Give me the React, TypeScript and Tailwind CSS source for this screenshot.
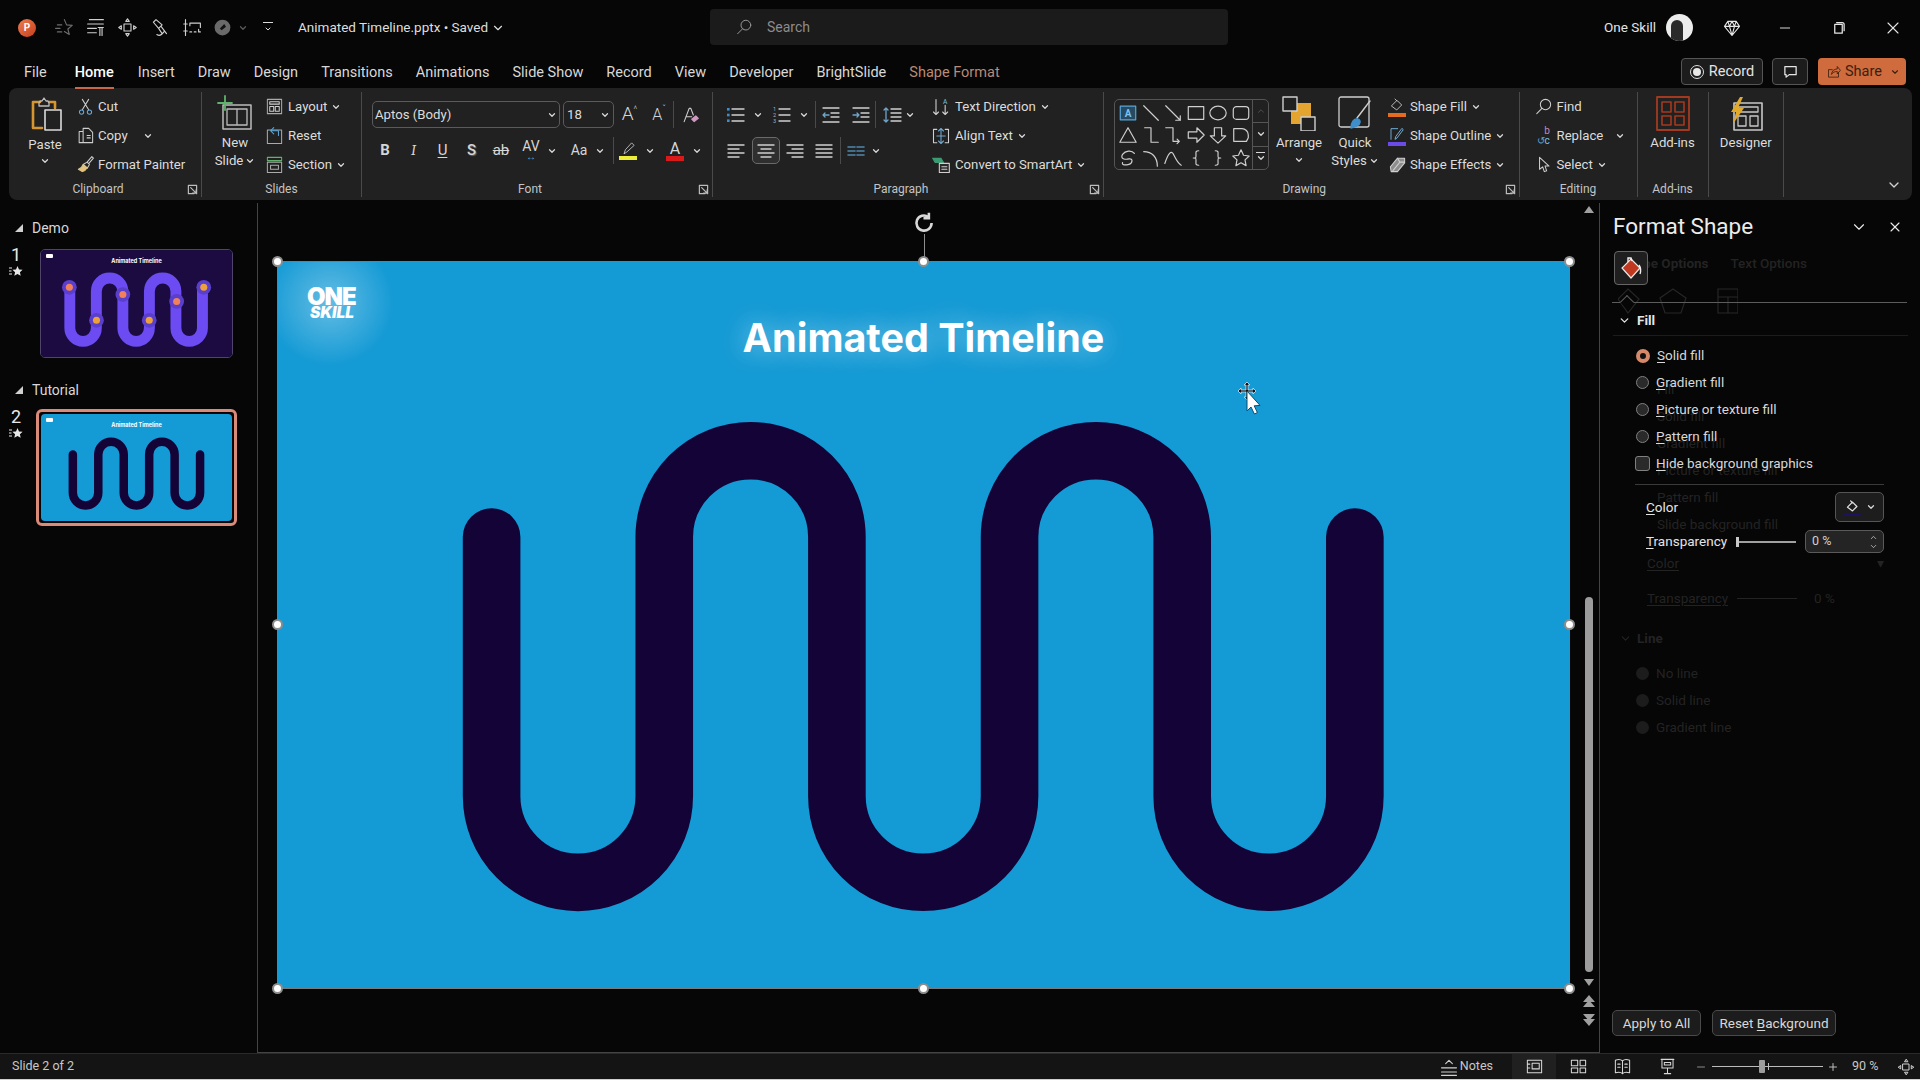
import type { ReactNode } from "react"
import { ChevronDown, ChevronUp, Minus, Plus, X } from "lucide-react"

const font = "[font-family:Roboto,'Noto_Sans',sans-serif]"

const tabs = ["Insert", "Draw", "Design", "Transitions", "Animations", "Slide Show", "Record", "View", "Developer", "BrightSlide"]

function Chev({ className = "" }: { className?: string }) {
  return <ChevronDown strokeWidth={3} className={`w-[10px] h-[10px] text-[#d8d8d8] shrink-0 ${className}`} />
}

function Icon({ children, size = 20, box = 24, className = "" }: { children: ReactNode; size?: number; box?: number; className?: string }) {
  return (
    <svg
      width={size}
      height={size}
      viewBox={`0 0 ${box} ${box}`}
      fill="none"
      stroke="#cfcfcf"
      strokeWidth={1.3}
      strokeLinecap="round"
      strokeLinejoin="round"
      className={`shrink-0 ${className}`}
    >
      {children}
    </svg>
  )
}

function Launcher() {
  return (
    <Icon size={11} box={12}>
      <path d="M1.5 1.5h9v9M1.5 1.5v9h6M4 4l6 6M10 6v4H6" stroke="#bdbdbd" />
    </Icon>
  )
}

function RibbonRow({ icon, label, chev, w = 22 }: { icon: ReactNode; label: string; chev?: boolean; w?: number }) {
  return (
    <div className="flex items-center h-[29px] text-[13.2px] text-[#dcdcdc] whitespace-nowrap">
      <div className="flex justify-center shrink-0" style={{ width: w }}>
        {icon}
      </div>
      <span className="ml-[2px]">{label}</span>
      {chev && <Chev className="ml-[4px]" />}
    </div>
  )
}

function GroupLabel({ label, launcher }: { label?: string; launcher?: boolean }) {
  return (
    <div className={`relative h-[16px] flex items-center justify-center text-[12px] text-[#c4c4c4] ${launcher ? "pr-[14px]" : ""}`}>
      {label}
      {launcher && (
        <span className="absolute right-[3px] top-[3px]">
          <Launcher />
        </span>
      )}
    </div>
  )
}

function Group({ w, label, launcher, children }: { w: number; label?: string; launcher?: boolean; children: ReactNode }) {
  return (
    <div className="flex flex-col shrink-0 border-r border-[#4a4a4a] mt-[4px] mb-[3px]" style={{ width: w }}>
      <div className="flex-1 flex min-h-0">{children}</div>
      <GroupLabel label={label} launcher={launcher} />
    </div>
  )
}

function Box({ w, children, className = "" }: { w: number; children: ReactNode; className?: string }) {
  return (
    <div className={`flex items-center justify-center shrink-0 h-[27px] text-[#d6d6d6] ${className}`} style={{ width: w }}>
      {children}
    </div>
  )
}

const Sep = () => <div className="w-px h-[27px] bg-[#4a4a4a] shrink-0" />

function Lines({ rows, dots, nums, color = "#cfcfcf" }: { rows: [number, number][]; dots?: boolean; nums?: boolean; color?: string }) {
  return (
    <Icon size={20} box={20}>
      {rows.map(([a, b], i) => (
        <path key={i} d={`M${a} ${4 + i * (12 / (rows.length - 1))}H${b}`} stroke={color} strokeWidth={1.4} />
      ))}
      {dots && (
        <>
          <rect x="1" y="3" width="2.6" height="2.6" fill="#3f8ecb" stroke="none" />
          <rect x="1" y="8.7" width="2.6" height="2.6" fill="#3f8ecb" stroke="none" />
          <rect x="1" y="14.4" width="2.6" height="2.6" fill="#3f8ecb" stroke="none" />
        </>
      )}
      {nums &&
        [1, 2, 3].map((n, i) => (
          <text key={n} x="2.5" y={6 + i * 6} textAnchor="middle" fontSize="5.5" fill="#9fb7c9" stroke="none">
            {n}
          </text>
        ))}
    </Icon>
  )
}

const galleryShapes: ReactNode[] = [
  <g key="a">
    <rect x="2.5" y="3.5" width="17" height="15" stroke="#5aa6d8" fill="#274a63" />
    <text x="11" y="15.5" textAnchor="middle" fontSize="11" fill="#7cc0ee" stroke="none" fontWeight="700">A</text>
  </g>,
  <path key="b" d="M3 3l16 16" />,
  <path key="c" d="M3 3l16 16M19 14v5h-5" />,
  <rect key="d" x="2.5" y="4" width="17" height="14" />,
  <ellipse key="e" cx="11" cy="11" rx="9" ry="7.5" />,
  <rect key="f" x="2.5" y="4" width="17" height="14" rx="3.5" />,
  <path key="g" d="M11 3L20 19H2z" />,
  <path key="h" d="M4 3h7v16h8" />,
  <path key="i" d="M3 3h8v15h7M15.5 15.5L18 18l-2.5 2.5" />,
  <path key="j" d="M2.5 7.5H12V3l8 8-8 8v-4.5H2.5z" />,
  <path key="k" d="M7 3h8v9h4.5L11 20 2.5 12H7z" />,
  <path key="l" d="M3 4h9a7 7 0 0 1 7 7v3l-2 4H3z" />,
  <path key="m" d="M18 6c-3-4-10-3-13 1-3 5 3 6 7 5 5-1 4 5 0 6-4 1-8 1-7-2" />,
  <path key="n" d="M3 4c9 0 15 6 15 16" />,
  <path key="o" d="M2 17C6 5 9 3 11 6c2 4 5 11 9 13" />,
  <path key="p" d="M14 3c-4 0-3 2-3 5s0 3-3 3c3 0 3 0 3 3s-1 5 3 5" />,
  <path key="q" d="M8 3c4 0 3 2 3 5s0 3 3 3c-3 0-3 0-3 3s1 5-3 5" />,
  <path key="r" d="M11 2l2.8 6 6.2.8-4.6 4.3 1.2 6.3L11 16.3l-5.6 3.1 1.2-6.3L2 8.8 8.2 8z" />,
]

function wavePath(x0: number, step: number, yTop: number, yBot: number, r: number, startY: number) {
  let d = `M${x0} ${startY}V${yBot}`
  for (let i = 0; i < 5; i++) {
    const x = x0 + step * (i + 1)
    const down = i % 2 === 0
    d += `A${r} ${r} 0 0 ${down ? 0 : 1} ${x} ${down ? yBot : yTop}`
    if (i < 4) d += `V${down ? yTop : yBot}`
  }
  d += `V${startY}`
  return d
}

const mainWave = wavePath(213.6, 172.65, 275, 534, 86.3, 275)

function SlideStar() {
  return (
    <svg width="14" height="12" viewBox="0 0 14 12" className="mt-[1px]">
      <path d="M8.5 1l1.5 3.4 3.6.4-2.7 2.4.8 3.6-3.2-1.9-3.2 1.9.8-3.6L3.4 4.8 7 4.4z" fill="#e6e6e6" />
      <path d="M0 3h3M0 6h2.5M0 9h3" stroke="#e6e6e6" strokeWidth={1} />
    </svg>
  )
}

function Thumb({ index, section, selected, children, className }: { index: number; section: string; selected?: boolean; children: ReactNode; className: string }) {
  return (
    <div>
      <div className="flex items-center h-[20px] pl-[15px] text-[14px] text-[#d8d8d8]">
        <span className="w-0 h-0 border-l-[8px] border-l-transparent border-b-[8px] border-b-[#d0d0d0] mr-[9px]" />
        {section}
      </div>
      <div className={`flex ${selected ? "mt-[9px]" : "mt-[11px]"}`}>
        <div className={`w-[37px] pl-[5px] flex flex-col items-center text-[#e8e8e8] text-[18px] leading-[18px] pr-[10px] ${selected ? "-mt-[1px]" : "-mt-[3px]"}`}>
          {index}
          <SlideStar />
        </div>
        <div className={selected ? "p-[2px] rounded-[6px] border-[3px] border-[#d98a78] -ml-[1px]" : "ml-[3px] rounded-[5px] border border-[#4e4568]"}>
          <div className={`relative w-[191px] h-[107px] rounded-[4px] overflow-hidden flex flex-col items-center ${className}`}>
            <div className="absolute left-[5px] top-[4px] w-[7px] h-[4px] bg-white rounded-[1px]" />
            <div className="absolute top-[7px] text-[5.5px] leading-[8px] font-bold text-white [font-family:Inter,sans-serif]">Animated Timeline</div>
            {children}
          </div>
        </div>
      </div>
    </div>
  )
}

function Handle({ className }: { className: string }) {
  return <span className={`absolute w-[11px] h-[11px] rounded-full bg-white border-2 border-[#8d8d8d] ${className}`} />
}

function Radio({ label, u, rest, on }: { label: string; u: string; rest: string; on?: boolean }) {
  return (
    <div className="flex items-center h-[27px] text-[13.5px] text-[#d8d8d8]" aria-label={label}>
      {on ? (
        <span className="w-[14px] h-[14px] rounded-full border-[4px] border-[#d4896a] bg-[#111] shrink-0" />
      ) : (
        <span className="w-[13px] h-[13px] rounded-full border border-[#808080] bg-[#2a2a2a] shrink-0" />
      )}
      <span className="ml-[7px]">
        <span className="underline underline-offset-2">{u}</span>
        {rest}
      </span>
    </div>
  )
}

function GhostPane() {
  return (
    <div className="absolute inset-0 pointer-events-none text-[13.5px] text-[#232323]">
      <div className="absolute left-[20px] top-[50px] flex gap-[22px] font-bold">
        <span>Shape Options</span>
        <span className="font-medium">Text Options</span>
      </div>
      <svg width="120" height="28" viewBox="0 0 120 28" className="absolute left-[18px] top-[84px]" fill="none" stroke="#262626" strokeWidth={1.2}>
        <path d="M10 2l11 10-11 14L0 12z" />
        <path d="M55 2l13 9-5 15H47l-5-15z" />
        <path d="M100 2h20v24h-20zM100 10h20M110 10v16" />
      </svg>
      <div className="pl-[57px] pt-[173px] leading-[27px]">
        <div>Fill</div>
        <div>Solid fill</div>
        <div>Gradient fill</div>
        <div>Picture or texture fill</div>
        <div>Pattern fill</div>
        <div>Slide background fill</div>
      </div>
      <div className="pl-[47px] leading-[27px] mt-[12px]">
        <div className="flex justify-between w-[237px]">
          <span className="underline underline-offset-2">Color</span>
          <span>▾</span>
        </div>
        <div className="flex items-center mt-[8px]">
          <span className="underline underline-offset-2">Transparency</span>
          <span className="ml-[9px] w-[60px] h-px bg-[#232323]" />
          <span className="ml-[17px]">0 %</span>
        </div>
      </div>
      <div className="pl-[19px] mt-[16px] flex items-center gap-[5px] font-bold">
        <ChevronDown className="w-[13px] h-[13px]" />
        Line
      </div>
      <div className="pl-[36px] mt-[12px] leading-[27px]">
        {["No line", "Solid line", "Gradient line"].map((t) => (
          <div key={t} className="flex items-center gap-[7px]">
            <span className="w-[13px] h-[13px] rounded-full bg-[#1c1c1c]" />
            {t}
          </div>
        ))}
      </div>
    </div>
  )
}

export default function App() {
  return (
    <div className={`h-screen w-full overflow-hidden flex flex-col bg-[#060606] ${font}`}>
      {/* title bar */}
      <div className="h-[55px] shrink-0 flex items-center relative">
        <div className="ml-[18px] w-[18px] h-[18px] rounded-full bg-gradient-to-br from-[#ef7b4d] to-[#c43e1c] flex items-center justify-center text-[10px] font-bold text-white">P</div>
        <div className="ml-[11px] flex items-center">
          <Box w={32}>
            <Icon size={21}>
              <path d="M13 3l2.5 6 6.5.5-5 4.2 1.6 6.3-5.6-3.4M5 9h5M3 13h5M5 17h5" stroke="#6d6d6d" />
            </Icon>
          </Box>
          <Box w={32}>
            <Icon size={21}>
              <path d="M5 3h16M3 8h18M3 13h10M3 18h10M15 12h6M17 12v9M19.5 12v9" />
            </Icon>
          </Box>
          <Box w={32}>
            <Icon size={21}>
              <path d="M8 8h8v8H8zM12 2l-2 3h4zM12 22l-2-3h4zM2 12l3-2v4zM22 12l-3-2v4z" />
            </Icon>
          </Box>
          <Box w={33}>
            <Icon size={21}>
              <path d="M8 3l7 6-4 4-6-7zM11 13l4 6M14 11l6 8M9 20c3 2 6 0 8-3" />
            </Icon>
          </Box>
          <Box w={33}>
            <Icon size={21}>
              <path d="M4 3v18M2 8h4M2 16h4M9 7h12v5M9 7v3M9 17h2M14 17h2M19 14v3h2" />
            </Icon>
          </Box>
          <Box w={26}>
            <Icon size={21}>
              <circle cx="12" cy="12" r="9" fill="#6a6a6a" stroke="none" />
              <path d="M9 13l5-5 2 3-5 4z" fill="#111" stroke="none" />
            </Icon>
          </Box>
          <Chev className="opacity-40 ml-[3px]" />
          <div className="ml-[15px] flex flex-col items-center gap-[2px]">
            <span className="w-[10px] h-[1.5px] bg-[#d8d8d8]" />
            <ChevronDown strokeWidth={3} className="w-[10px] h-[8px] text-[#d8d8d8]" />
          </div>
        </div>
        <div className="ml-[25px] flex items-center text-[13.5px] text-[#dedede]">
          Animated Timeline.pptx&nbsp;•&nbsp;Saved
          <ChevronDown strokeWidth={2} className="ml-[3px] w-[14px] h-[14px]" />
        </div>
        <div className="absolute left-[710px] top-[9px] w-[518px] h-[36px] rounded-[4px] bg-[#1b1b1b] flex items-center pl-[25px] text-[14px] text-[#8c8c8c]">
          <Icon size={18} className="mr-[14px]">
            <circle cx="14.5" cy="9.5" r="6.5" stroke="#999" />
            <path d="M10 14.5L3.5 21" stroke="#999" />
          </Icon>
          Search
        </div>
        <div className="ml-auto flex items-center text-[13.5px] text-[#e4e4e4]">
          One Skill
          <div className="ml-[10px] w-[27px] h-[27px] rounded-full bg-[#ececec] flex items-end justify-center overflow-hidden">
            <span className="block w-[12px] h-[21px] rounded-t-[6px] bg-[#2a2a2a] -ml-[5px]" />
          </div>
          <Icon size={20} className="ml-[29px]">
            <path d="M7 4h10l4 6-9 11L3 10zM3 10h18M9 10l3 11 3-11M7 4l2 6 3-6 3 6 2-6" stroke="#e6e6e6" />
          </Icon>
          <Minus className="ml-[35px] w-[16px] h-[16px]" strokeWidth={1.4} />
          <Icon size={15} className="ml-[38px]">
            <path d="M6 7h12v14H6zM9 4h9a3 3 0 0 1 3 3v10" stroke="#e6e6e6" strokeWidth={2} />
          </Icon>
          <X className="ml-[37px] mr-[17px] w-[20px] h-[20px]" strokeWidth={1.3} />
        </div>
      </div>

      {/* tabs */}
      <div className="h-[33px] shrink-0 flex items-center text-[14.5px] text-[#d8d8d8] pl-[24px] pt-[2px]">
        <span>File</span>
        <span className="relative ml-[28px] font-medium text-white">
          Home
          <span className="absolute left-0 right-0 -bottom-[6px] h-[2px] bg-[#c8674a]" />
        </span>
        <div className="flex ml-[24px] gap-[23px]">
          {tabs.map((t) => (
            <span key={t}>{t}</span>
          ))}
          <span className="text-[#b98a76]">Shape Format</span>
        </div>
        <div className="ml-auto flex items-center h-[27px] mr-[14px] -mt-[2px]">
          <div className="w-[82px] h-full rounded-[4px] border border-[#555] bg-[#1c1c1c] flex items-center justify-center gap-[5px] text-[14.5px] text-[#e4e4e4]">
            <span className="w-[14px] h-[14px] rounded-full border-[1.5px] border-[#ddd] flex items-center justify-center">
              <span className="w-[8px] h-[8px] rounded-full bg-[#e8e8e8]" />
            </span>
            Record
          </div>
          <div className="ml-[9px] w-[36px] h-full rounded-[4px] border border-[#555] bg-[#1c1c1c] flex items-center justify-center">
            <Icon size={15}>
              <path d="M3 4h18v13H10l-5 4v-4H3z" stroke="#e6e6e6" strokeWidth={2} />
            </Icon>
          </div>
          <div className="ml-[10px] w-[88px] h-full rounded-[4px] bg-[#cf6b3c] flex items-center pl-[8px] gap-[4px] text-[14.5px] text-[#3a1f10]">
            <Icon size={15}>
              <path d="M20 14v7H4V9h6M9 16c0-5 4-8 9-8V4l5 6-5 6v-4c-4 0-7 1-9 4z" stroke="#3a1f10" />
            </Icon>
            Share
            <ChevronDown strokeWidth={2.6} className="ml-auto mr-[6px] w-[10px] h-[10px]" />
          </div>
        </div>
      </div>

      {/* ribbon */}
      <div className="h-[112px] shrink-0 mx-[9px] mr-[8px] rounded-[8px] bg-[#212121] flex">
        <Group w={193} label="Clipboard" launcher>
          <div className="w-[40px] ml-[16px] flex flex-col items-center pt-[4px] text-[13.2px] text-[#dcdcdc]">
            <Icon size={36} box={36} className="ml-[3px]">
              <path d="M4 6h7M20 6h6v6M4 6v26h9" stroke="#d6962f" strokeWidth={2.6} />
              <path d="M10 7l1-2h2l2-3 2 3h2l1 2v3H10z" stroke="#bbb" />
              <rect x="16" y="14" width="16" height="20" stroke="#dadada" strokeWidth={1.6} fill="#212121" />
            </Icon>
            <span className="mt-[5px] leading-[16px]">Paste</span>
            <Chev className="mt-[3px]" />
          </div>
          <div className="ml-[9px]">
            <RibbonRow
              label="Cut"
              icon={
                <Icon size={19}>
                  <path d="M8 3l8 13M16 3L8 16" />
                  <circle cx="7" cy="19" r="2.7" stroke="#69a8d6" />
                  <circle cx="17" cy="19" r="2.7" stroke="#69a8d6" />
                </Icon>
              }
            />
            <div className="flex items-center">
              <RibbonRow
                label="Copy"
                icon={
                  <Icon size={19}>
                    <path d="M9 7V3h7l5 5v13H9zM9 7H4v14h5M14 12h4M14 15h4" />
                  </Icon>
                }
              />
              <Chev className="ml-[15px]" />
            </div>
            <RibbonRow
              label="Format Painter"
              icon={
                <Icon size={19}>
                  <path d="M14 9L20 2l2 2-6 7M9 12l5-3 3 3-3 5z" />
                  <path d="M9 12c-1 3-3 5-6 6l5 3c3-1 5-3 6-5z" fill="#e0c27e" stroke="#e0c27e" />
                </Icon>
              }
            />
          </div>
        </Group>

        <Group w={160} label="Slides">
          <div className="w-[62px] ml-[2px] flex flex-col items-center pt-[3px] text-[13.2px] leading-[18px] text-[#dcdcdc]">
            <Icon size={36} box={36}>
              <path d="M6 10h28v24H6z" stroke="#bcbcbc" strokeWidth={1.5} />
              <path d="M10 14h20v16H10zM20 14v16" stroke="#bcbcbc" />
              <path d="M8 1v14M1 8h14" stroke="#5fb36b" strokeWidth={1.8} />
            </Icon>
            <span className="mt-[3px]">New</span>
            <span className="flex items-center gap-[2px]">
              Slide <Chev />
            </span>
          </div>
          <div className="-ml-[4px]">
            <RibbonRow
              w={24}
              label="Layout"
              chev
              icon={
                <Icon size={19}>
                  <rect x="3" y="3" width="18" height="18" stroke="#aaa" />
                  <path d="M6 6h12v3H6zM6 12h5v6H6zM13 12h5v6h-5z" />
                </Icon>
              }
            />
            <RibbonRow
              w={24}
              label="Reset"
              icon={
                <Icon size={19}>
                  <rect x="3" y="5" width="18" height="17" stroke="#aaa" />
                  <path d="M11 2L7 6l4 4M7 6h10v6" stroke="#5aa6d8" />
                </Icon>
              }
            />
            <RibbonRow
              w={24}
              label="Section"
              chev
              icon={
                <Icon size={19}>
                  <path d="M3 3h18v4H3z" stroke="#5fb36b" />
                  <path d="M3 9h18v13H3zM7 13h10v5H7z" stroke="#aaa" />
                </Icon>
              }
            />
          </div>
        </Group>

        <Group w={351} label="Font" launcher>
          <div className="pl-[10px] pt-[9px]">
            <div className="flex items-center">
              <div className="w-[188px] h-[27px] rounded-[5px] border border-[#5a5a5a] flex items-center justify-between px-[2px] text-[13.2px] text-[#dcdcdc]">
                Aptos (Body)
                <Chev />
              </div>
              <div className="ml-[3px] w-[51px] h-[27px] rounded-[5px] border border-[#5a5a5a] flex items-center justify-between px-[3px] text-[13.2px] text-[#dcdcdc]">
                18
                <Chev />
              </div>
              <Box w={31} className="text-[19px] font-light">
                A<span className="text-[9px] -mt-[10px]">^</span>
              </Box>
              <Box w={28} className="text-[16px] font-light">
                A<span className="text-[9px] -mt-[10px]">ˇ</span>
              </Box>
              <Sep />
              <Box w={32}>
                <Icon size={20}>
                  <path d="M5 20L11 4h2l3 8M7 14h7" />
                  <path d="M14 17l5-4 3 3-5 4z" fill="#cf9ac0" stroke="#cf9ac0" />
                </Icon>
              </Box>
            </div>
            <div className="flex items-center mt-[9px] -ml-[1px] text-[15px]">
              <Box w={28} className="font-bold">B</Box>
              <Box w={29} className="italic font-serif">I</Box>
              <Box w={29} className="underline underline-offset-2">U</Box>
              <Box w={29} className="font-medium [text-shadow:1px_1px_1px_#666]">S</Box>
              <Box w={30} className="line-through">ab</Box>
              <Box w={30}>
                <span className="flex flex-col items-center text-[14px] leading-[13px]">
                  AV
                  <span className="text-[#5aa6d8] text-[10px] leading-[8px]">↔</span>
                </span>
              </Box>
              <Box w={12}>
                <Chev />
              </Box>
              <Box w={30} className="ml-[6px] text-[14px]">Aa</Box>
              <Box w={12}>
                <Chev />
              </Box>
              <div className="ml-[7px]"><Sep /></div>
              <Box w={28}>
                <span className="flex flex-col items-center">
                  <Icon size={15}>
                    <path d="M5 20l2-6L17 3l4 4-11 10z" />
                  </Icon>
                  <span className="w-[18px] h-[4px] bg-[#ecec3a]" />
                </span>
              </Box>
              <Box w={12} className="ml-[2px]">
                <Chev />
              </Box>
              <Box w={38} className="text-[16px]">
                <span className="flex flex-col items-center leading-[15px]">
                  A
                  <span className="w-[18px] h-[5px] bg-[#d81a1a]" />
                </span>
              </Box>
              <Box w={12} className="-ml-[3px]">
                <Chev />
              </Box>
            </div>
          </div>
        </Group>

        <Group w={391} label="Paragraph" launcher>
          <div className="pl-[8px] pt-[9px] w-[216px] shrink-0">
            <div className="flex items-center">
              <Box w={30}><Lines rows={[[6, 18], [6, 18], [6, 18]]} dots /></Box>
              <Box w={14}><Chev /></Box>
              <Box w={30} className="ml-[2px]"><Lines rows={[[7, 18], [7, 18], [7, 18]]} nums /></Box>
              <Box w={14}><Chev /></Box>
              <div className="ml-[4px]"><Sep /></div>
              <Box w={30}>
                <Icon size={20} box={20}>
                  <path d="M2 3h16M10 8h8M10 12h8M2 17h16" />
                  <path d="M8 10H2m2-2l-2 2 2 2" stroke="#6fa5c9" />
                </Icon>
              </Box>
              <Box w={29}>
                <Icon size={20} box={20}>
                  <path d="M2 3h16M10 8h8M10 12h8M2 17h16" />
                  <path d="M2 10h6m-2-2l2 2-2 2" stroke="#6fa5c9" />
                </Icon>
              </Box>
              <Sep />
              <Box w={24} className="ml-[4px]">
                <Icon size={20} box={20}>
                  <path d="M9 4h10M9 8h10M9 12h10M9 16h10" />
                  <path d="M4 3v14M2 5l2-2 2 2M2 15l2 2 2-2" stroke="#6fa5c9" />
                </Icon>
              </Box>
              <Box w={12}><Chev /></Box>
            </div>
            <div className="flex items-center mt-[9px]">
              <Box w={30}><Lines rows={[[2, 18], [2, 13], [2, 18], [2, 13]]} /></Box>
              <Box w={28} className="ml-[1px] rounded-[5px] border border-[#6a6a6a] bg-[#2f2f2f]"><Lines rows={[[2, 18], [5, 15], [2, 18], [5, 15]]} /></Box>
              <Box w={30}><Lines rows={[[2, 18], [7, 18], [2, 18], [7, 18]]} /></Box>
              <Box w={28}><Lines rows={[[2, 18], [2, 18], [2, 18], [2, 18]]} /></Box>
              <div className="ml-[2px]"><Sep /></div>
              <Box w={30}>
                <Icon size={20} box={20}>
                  <path d="M2 6h7M2 10h7M2 14h7M11 6h7M11 10h7M11 14h7" stroke="#4f88ad" strokeWidth={1.6} />
                </Icon>
              </Box>
              <Box w={10}><Chev /></Box>
            </div>
          </div>
          <div>
            <RibbonRow
              w={24}
              label="Text Direction"
              chev
              icon={
                <Icon size={20}>
                  <path d="M6 3v18M3 18l3 3 3-3M17 21V10M14 18l3 3 3-3" />
                  <text x="17" y="8" textAnchor="middle" fontSize="8" fill="#7cc0ee" stroke="none">A</text>
                </Icon>
              }
            />
            <RibbonRow
              w={24}
              label="Align Text"
              chev
              icon={
                <Icon size={20}>
                  <path d="M7 4H3v16h4M17 4h4v16h-4" />
                  <path d="M12 3v18M9 6l3-3 3 3M9 18l3 3 3-3M7 12h10" stroke="#6fa5c9" />
                </Icon>
              }
            />
            <RibbonRow
              w={24}
              label="Convert to SmartArt"
              chev
              icon={
                <Icon size={20}>
                  <path d="M2 4h10l3 5H5z" fill="#3b9a72" stroke="#3b9a72" />
                  <rect x="10" y="10" width="12" height="11" fill="#2a2a2a" />
                  <path d="M13 14h6M13 17h6" />
                </Icon>
              }
            />
          </div>
        </Group>

        <Group w={415.5} label="Drawing" launcher>
          <div className="ml-[10px] mt-[7px] h-[71px] w-[155px] shrink-0 rounded-[5px] border border-[#555] flex">
            <div className="grid grid-cols-6 flex-1 pl-[2px] pt-[2px]">
              {galleryShapes.map((s, i) => (
                <div key={i} className="flex items-center justify-center h-[22px]">
                  <Icon size={20} box={22}>{s}</Icon>
                </div>
              ))}
            </div>
            <div className="w-[16px] border-l border-[#555] flex flex-col text-[#d8d8d8]">
              <div className="flex-1 flex items-center justify-center opacity-30"><ChevronUp className="w-[10px] h-[10px]" /></div>
              <div className="flex-1 flex items-center justify-center border-y border-[#555]"><Chev /></div>
              <div className="flex-1 flex flex-col items-center justify-center">
                <span className="w-[9px] h-px bg-[#d8d8d8]" />
                <Chev />
              </div>
            </div>
          </div>
          <div className="ml-[2px] w-[56px] flex flex-col items-center pt-[3px] text-[13.2px] leading-[18px] text-[#dcdcdc]">
            <Icon size={36} box={36}>
              <rect x="10" y="8" width="20" height="21" fill="#e3a52f" stroke="none" />
              <rect x="2" y="2" width="14" height="14" fill="#212121" stroke="#cfcfcf" strokeWidth={1.4} />
              <rect x="20" y="22" width="14" height="14" fill="#212121" stroke="#cfcfcf" strokeWidth={1.4} />
            </Icon>
            <span className="mt-[3px]">Arrange</span>
            <Chev className="mt-[3px]" />
          </div>
          <div className="w-[56px] flex flex-col items-center pt-[3px] text-[13.2px] leading-[18px] text-[#dcdcdc]">
            <Icon size={36} box={36}>
              <rect x="2" y="2" width="30" height="30" rx="2" stroke="#cfcfcf" />
              <path d="M33 6c-4 5-9 12-13 17" stroke="#cfcfcf" strokeWidth={1.4} />
              <path d="M14 33c0-6 3-10 7-9 3 1 3 5-1 7-2 1-4 2-6 2z" fill="#3f8ecb" stroke="#3f8ecb" />
            </Icon>
            <span className="mt-[3px]">Quick</span>
            <span className="flex items-center gap-[2px]">
              Styles <Chev />
            </span>
          </div>
          <div className="ml-[3px]">
            <RibbonRow
              label="Shape Fill"
              chev
              icon={
                <span className="flex flex-col items-center">
                  <Icon size={16}>
                    <path d="M4 13l8-8 7 7-7 7zM9 3l3 3" />
                  </Icon>
                  <span className="w-[18px] h-[4px] bg-[#e56b1f]" />
                </span>
              }
            />
            <RibbonRow
              label="Shape Outline"
              chev
              icon={
                <span className="flex flex-col items-center">
                  <Icon size={16}>
                    <path d="M3 20V4h10M21 6l-9 12-3 2 1-4 9-12z" stroke="#7cc0ee" />
                  </Icon>
                  <span className="w-[18px] h-[4px] bg-[#6c4ae8]" />
                </span>
              }
            />
            <RibbonRow
              label="Shape Effects"
              chev
              icon={
                <Icon size={19}>
                  <path d="M3 15L12 4h9v6l-9 11H4z" fill="#8d8d8d" />
                  <path d="M12 4l3 5h6M15 9L6 20" />
                </Icon>
              }
            />
          </div>
        </Group>

        <Group w={118} label="Editing">
          <div className="ml-[13px]">
            <RibbonRow
              label="Find"
              icon={
                <Icon size={19}>
                  <circle cx="14.5" cy="9.5" r="6.5" />
                  <path d="M10 14.5L3.5 21" />
                </Icon>
              }
            />
            <div className="flex items-center">
              <RibbonRow
                label="Replace"
                icon={
                  <span className="flex items-end text-[10px] leading-[10px] h-[20px]">
                    <span className="text-[#5aa6d8]">↺</span>
                    <span className="flex flex-col items-center -ml-[1px]">
                      <span className="text-[#c08ac0]">b</span>
                      <span className="text-[#7cc0ee]">c</span>
                    </span>
                  </span>
                }
              />
              <Chev className="ml-[12px]" />
            </div>
            <RibbonRow
              label="Select"
              chev
              icon={
                <Icon size={19}>
                  <path d="M7 3v15l4-3 2 6 3-1-2-6h5z" />
                </Icon>
              }
            />
          </div>
        </Group>

        <Group w={71} label="Add-ins">
          <div className="w-full flex flex-col items-center pt-[4px] text-[13.2px] leading-[18px] text-[#dcdcdc]">
            <Icon size={36} box={36}>
              <rect x="2" y="1" width="32" height="33" stroke="#a33a20" strokeWidth={1.8} />
              <path d="M7 6h9v10H7zM20 6h9v10h-9zM7 20h9v9H7zM20 20h9v9h-9z" stroke="#a33a20" strokeWidth={1.6} />
            </Icon>
            <span className="mt-[2px]">Add-ins</span>
          </div>
        </Group>

        <Group w={75.5}>
          <div className="w-full flex flex-col items-center pt-[4px] text-[13.2px] leading-[18px] text-[#dcdcdc]">
            <Icon size={36} box={36}>
              <rect x="6" y="7" width="28" height="27" stroke="#c8c8c8" strokeWidth={1.6} />
              <path d="M10 11h20v5H10zM10 20h8v10h-8zM22 20h8v10h-8z" stroke="#c8c8c8" />
              <path d="M12 1L3 16h5l-3 12 11-16h-6l5-11z" fill="#e2a92b" stroke="none" />
            </Icon>
            <span className="mt-[2px]">Designer</span>
          </div>
        </Group>

        <div className="flex-1 flex items-end justify-end pr-[10px] pb-[7px]">
          <ChevronDown className="w-[16px] h-[16px] text-[#d0d0d0]" />
        </div>
      </div>

      {/* body */}
      <div className="flex-1 flex min-h-0">
        <div className="w-[258px] shrink-0 border-r border-[#444] mt-[3px] pt-[15px] flex flex-col gap-[22px]">
          <Thumb index={1} section="Demo" className="bg-[#1b0b40]">
            <svg viewBox="0 0 1291 726" className="absolute inset-0 w-full h-full">
              <path d={wavePath(193, 180, 280, 530, 90, 253)} fill="none" stroke="#6c4cf2" strokeWidth={74} />
              {[[190, 253], [374, 477], [553, 302], [732, 477], [918, 349], [1102, 253]].map(([x, y], i) => (
                <g key={i}>
                  <circle cx={x} cy={y} r={50} fill="#5a3ecc" />
                  <circle cx={x} cy={y} r={24} fill={i % 2 ? "#eda13a" : "#f2805a"} />
                </g>
              ))}
            </svg>
          </Thumb>
          <Thumb index={2} section="Tutorial" selected className="bg-[#149ad5]">
            <svg viewBox="0 0 1291 726" className="absolute inset-0 w-full h-full">
              <path d={mainWave} fill="none" stroke="#130337" strokeWidth={57.6} strokeLinecap="round" />
            </svg>
          </Thumb>
        </div>

        <div className="flex-1 relative pl-[20px] pt-[62px] min-w-0 border-b border-[#444]">
          <div className="relative w-[1291px] h-[726px] bg-[#149ad5] outline outline-1 outline-[#7a7a7a] flex flex-col items-center">
            <div className="absolute inset-0 overflow-hidden">
              <div className="absolute -left-[13px] -top-[25px] w-[130px] h-[130px] rounded-full bg-[radial-gradient(circle,rgba(255,255,255,0.34),rgba(255,255,255,0)_70%)]" />
            </div>
            <div className="absolute left-[29px] top-[26px] flex flex-col items-start text-white [font-family:Inter,sans-serif] font-black italic">
              <span className="text-[24px] leading-[17px] tracking-[-1px] not-italic">ONE</span>
              <span className="text-[15.5px] leading-[12px] mt-[2px] ml-[3px]">SKILL</span>
            </div>
            <div className="relative mt-[52px] text-[39.5px] leading-[48px] font-bold text-white [font-family:Inter,sans-serif] [text-shadow:0_0_26px_rgba(255,255,255,0.5)]">
              Animated Timeline
            </div>
            <svg viewBox="0 0 1291 726" className="absolute inset-0 w-full h-full">
              <path d={mainWave} fill="none" stroke="#130337" strokeWidth={57.6} strokeLinecap="round" />
            </svg>

            <Handle className="-left-[6px] -top-[6px]" />
            <Handle className="left-1/2 -ml-[6px] -top-[6px]" />
            <Handle className="-right-[6px] -top-[6px]" />
            <Handle className="-left-[6px] top-1/2 -mt-[6px]" />
            <Handle className="-right-[6px] top-1/2 -mt-[6px]" />
            <Handle className="-left-[6px] -bottom-[6px]" />
            <Handle className="left-1/2 -ml-[6px] -bottom-[6px]" />
            <Handle className="-right-[6px] -bottom-[6px]" />
            <span className="absolute left-1/2 -top-[28px] w-px h-[23px] bg-[#8d8d8d]" />
            <svg width="26" height="26" viewBox="0 0 24 24" className="absolute left-[633px] -top-[52px]" fill="none" stroke="#d8d8d8" strokeWidth={2.4}>
              <path d="M19 12a7 7 0 1 1-3-5.7" />
              <path d="M16.5 2.5v5h-5" />
            </svg>
            {/* mouse cursor */}
            <svg width="34" height="36" viewBox="0 0 34 36" className="absolute left-[957px] top-[118px]">
              <path d="M12 2l-3 3h2v5H6V8l-3 3 3 3v-2h5v5H9l3 3 3-3h-2v-5h5v2l3-3-3-3v2h-5V5h2z" fill="#111" stroke="#cfeaf7" strokeWidth={0.8} />
              <path d="M12 11v20l4-4 3.4 7 3-1.4-3.2-6.8 5.8-.4z" fill="#fff" stroke="#0d4f70" strokeWidth={1} />
            </svg>
          </div>

          <div className="absolute right-0 top-0 bottom-0 w-[20px] flex flex-col items-center pr-[1px]">
            <span className="mt-[6px] w-0 h-0 border-x-[5px] border-x-transparent border-b-[7px] border-b-[#a0a0a0]" />
            <span className="mt-[384px] w-[8px] h-[375px] rounded-full bg-[#9c9c9c]" />
            <span className="mt-[7px] w-0 h-0 border-x-[5px] border-x-transparent border-t-[7px] border-t-[#a0a0a0]" />
            <div className="mt-[9px] flex flex-col items-center text-[#a0a0a0]">
              <span className="w-0 h-0 border-x-[6px] border-x-transparent border-b-[7px] border-b-[#a0a0a0]" />
              <span className="-mt-[2px] w-0 h-0 border-x-[6px] border-x-transparent border-b-[7px] border-b-[#a0a0a0]" />
            </div>
            <div className="mt-[7px] flex flex-col items-center">
              <span className="w-0 h-0 border-x-[6px] border-x-transparent border-t-[7px] border-t-[#a0a0a0]" />
              <span className="-mt-[2px] w-0 h-0 border-x-[6px] border-x-transparent border-t-[7px] border-t-[#a0a0a0]" />
            </div>
          </div>
        </div>

        {/* format pane */}
        <div className="w-[321px] shrink-0 border-l border-[#444] mt-[3px] relative pl-[13px] flex flex-col">
          <GhostPane />
          <div className="relative flex flex-col flex-1 -mt-[3px]">
            <div className="mt-[13px] flex items-center h-[28px] text-[22.5px] text-[#ececec]">
              Format Shape
              <ChevronDown className="ml-auto w-[18px] h-[18px]" strokeWidth={1.5} />
              <X className="ml-[19px] mr-[17px] w-[16px] h-[16px]" strokeWidth={1.6} />
            </div>
            <div className="mt-[10px] ml-[1px] w-[34px] h-[34px] rounded-[4px] border border-[#666] bg-[#1f1f1f] flex items-center justify-center">
              <svg width="24" height="24" viewBox="0 0 24 24">
                <path d="M12 3l9 9-9 10-9-10z" fill="#c0391f" stroke="#e8e8e8" strokeWidth={1.2} />
                <path d="M9 6V2h3l1 3M20 9c2 3 2 6 1 9" fill="none" stroke="#f0f0f0" strokeWidth={1.4} />
              </svg>
            </div>
            <div className="relative mt-[17px] h-px w-[295px] -ml-[1px] bg-[#5c5c5c]">
              <span className="absolute left-[10px] -top-[5px] w-[10px] h-[10px] rotate-45 border-l border-t border-[#5c5c5c] bg-[#060606]" />
            </div>
            <div className="mt-[6px] h-[22px] pl-[5px] flex items-center text-[13.5px] font-bold text-[#e4e4e4]">
              <ChevronDown className="w-[13px] h-[13px] mr-[6px]" strokeWidth={2.4} />
              Fill
            </div>
            <div className="mt-[4px] h-px w-[295px] bg-[#1c1c1c]" />
            <div className="mt-[6px] pl-[23px]">
              <Radio label="Solid fill" u="S" rest="olid fill" on />
              <Radio label="Gradient fill" u="G" rest="radient fill" />
              <Radio label="Picture or texture fill" u="P" rest="icture or texture fill" />
              <Radio label="Pattern fill" u="P" rest="attern fill" />
              <div className="flex items-center h-[27px] text-[13.5px] text-[#d8d8d8] -ml-[1px]">
                <span className="w-[15px] h-[15px] rounded-[3px] border border-[#808080] bg-[#2a2a2a]" />
                <span className="ml-[6px]">
                  <span className="underline underline-offset-2">H</span>ide background graphics
                </span>
              </div>
            </div>
            <div className="mt-[7px] ml-[22px] h-px w-[249px] bg-[#3a3a3a]" />
            <div className="relative mt-[7px] ml-[33px] w-[238px] flex items-center justify-between h-[30px] text-[13.5px] text-[#e4e4e4]">
              <span>
                <span className="underline underline-offset-2">C</span>olor
              </span>
              <div className="w-[49px] h-[30px] rounded-[5px] border border-[#555] bg-[#1d1d1d] flex items-center justify-center gap-[5px]">
                <span className="flex flex-col items-center">
                  <Icon size={15}>
                    <path d="M4 13l8-8 7 7-7 7zM9 3l3 3" stroke="#e0e0e0" strokeWidth={2} />
                  </Icon>
                  <span className="w-[17px] h-[2px] bg-[#1d1160]" />
                </span>
                <Chev />
              </div>
            </div>
            <div className="relative mt-[8px] ml-[33px] w-[238px] flex items-center h-[23px] text-[13.5px] text-[#e4e4e4]">
              <span>
                <span className="underline underline-offset-2">T</span>ransparency
              </span>
              <div className="relative ml-auto mr-[9px] w-[60px] h-[2px] bg-[#a0a0a0]">
                <span className="absolute left-0 -top-[4px] w-[3px] h-[10px] bg-[#c8c8c8]" />
              </div>
              <div className="w-[79px] h-[23px] rounded-[5px] border border-[#5a5a5a] bg-[#242424] flex items-center justify-between pl-[6px] pr-[5px] text-[12.5px] text-[#d0d0d0]">
                0 %
                <span className="flex flex-col">
                  <ChevronUp className="w-[9px] h-[9px]" />
                  <ChevronDown className="w-[9px] h-[9px]" />
                </span>
              </div>
            </div>
            <div className="mt-auto mb-[17px] flex gap-[11px] text-[13.5px] text-[#d8d8d8]">
              <div className="w-[89px] h-[26px] -ml-px rounded-[5px] border border-[#4a4a4a] bg-[#1c1c1c] flex items-center justify-center">Apply to All</div>
              <div className="w-[124px] h-[26px] rounded-[5px] border border-[#4a4a4a] bg-[#1c1c1c] flex items-center justify-center">
                <span>
                  Reset <span className="underline underline-offset-2">B</span>ackground
                </span>
              </div>
            </div>
          </div>
        </div>
      </div>

      {/* status bar */}
      <div className="h-[27px] shrink-0 border-t border-[#2a2a2a] border-b border-b-[#cfcfcf] bg-[#141414] flex items-center text-[12.5px] text-[#c8c8c8]">
        <span className="ml-[12px]">Slide 2 of 2</span>
        <div className="ml-auto flex items-center h-full">
          <Icon size={20}>
            <path d="M3 13h18M3 18h18M3 22h18M8 8l4-4 4 4" stroke="#d0d0d0" />
          </Icon>
          <span className="ml-[1px]">Notes</span>
          <div className="ml-[19px] w-[44px] h-full bg-[#202020] flex items-center justify-center">
            <Icon size={19}>
              <path d="M3 4h18v16H3zM3 9h3M3 14h3M9 8h9v7H9z" stroke="#d8d8d8" />
            </Icon>
          </div>
          <Box w={44}>
            <Icon size={19}>
              <path d="M3 4h8v7H3zM14 4h7v7h-7zM3 14h8v6H3zM14 14h7v6h-7z" stroke="#d8d8d8" />
            </Icon>
          </Box>
          <Box w={45}>
            <Icon size={19}>
              <path d="M12 5c-2-2-6-2-9-1v16c3-1 7-1 9 1 2-2 6-2 9-1V4c-3-1-7-1-9 1zM12 5v16M6 9h3M6 13h3M15 9h3M15 13h3" stroke="#d8d8d8" />
            </Icon>
          </Box>
          <Box w={45}>
            <Icon size={19}>
              <path d="M4 3h16M5 3v11h14V3M12 14v7M8 21h8M8 7h8v3H8z" stroke="#d8d8d8" />
            </Icon>
          </Box>
          <Minus className="ml-[5px] w-[12px] h-[12px] text-[#8a8a8a]" />
          <div className="relative ml-[5px] w-[111px] h-[1.5px] bg-[#bdbdbd]">
            <span className="absolute left-[47px] -top-[6px] w-[6px] h-[13px] rounded-[1px] bg-[#9d9d9d]" />
            <span className="absolute left-[56px] -top-[3px] w-px h-[7px] bg-[#bdbdbd]" />
          </div>
          <Plus className="ml-[4px] w-[12px] h-[12px] text-[#bdbdbd]" />
          <span className="ml-[13px] w-[30px]">90 %</span>
          <Icon size={18} className="ml-[15px] mr-[5px]">
            <path d="M8 8h8v8H8zM12 2l-2 3h4zM12 22l-2-3h4zM2 12l3-2v4zM22 12l-3-2v4z" stroke="#d8d8d8" />
          </Icon>
        </div>
      </div>
    </div>
  )
}
